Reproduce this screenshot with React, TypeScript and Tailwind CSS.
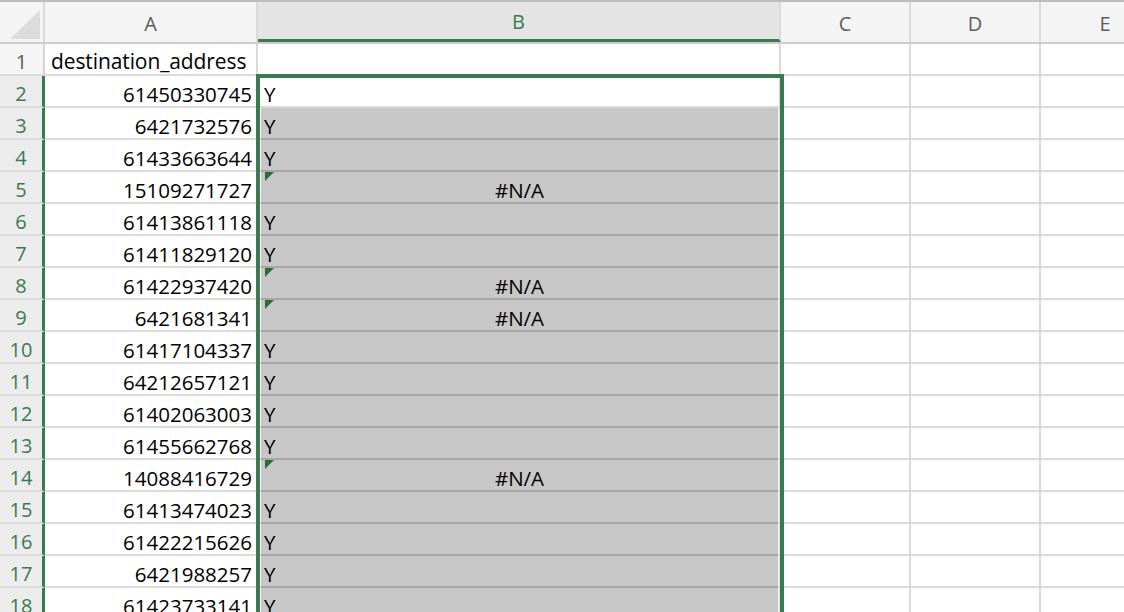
import React from 'react';

const GREEN = '#3b7a4f';

const rows: { n: number; a: string; b: string }[] = [
  { n: 2, a: '61450330745', b: 'Y' },
  { n: 3, a: '6421732576', b: 'Y' },
  { n: 4, a: '61433663644', b: 'Y' },
  { n: 5, a: '15109271727', b: '#N/A' },
  { n: 6, a: '61413861118', b: 'Y' },
  { n: 7, a: '61411829120', b: 'Y' },
  { n: 8, a: '61422937420', b: '#N/A' },
  { n: 9, a: '6421681341', b: '#N/A' },
  { n: 10, a: '61417104337', b: 'Y' },
  { n: 11, a: '64212657121', b: 'Y' },
  { n: 12, a: '61402063003', b: 'Y' },
  { n: 13, a: '61455662768', b: 'Y' },
  { n: 14, a: '14088416729', b: '#N/A' },
  { n: 15, a: '61413474023', b: 'Y' },
  { n: 16, a: '61422215626', b: 'Y' },
  { n: 17, a: '6421988257', b: 'Y' },
  { n: 18, a: '61423733141', b: 'Y' },
];

function ErrorMark() {
  return (
    <svg width="9" height="9" viewBox="0 0 9 9" className="absolute left-[4px] top-0">
      <polygon points="0,0 9,0 0,9" fill="#2f6b3c" />
    </svg>
  );
}

function ColHeader({ label, w, active }: { label: string; w: string; active?: boolean }) {
  return (
    <div
      className={`${w} shrink-0 h-full flex items-center justify-center border-r-2 border-[#dadada] text-[20px] ${
        active ? 'bg-[#e4e4e4] text-[#3b7a4f] border-b-[3px] border-b-[#3b7a4f]' : 'text-[#5c5c5c]'
      }`}
    >
      <span className="pt-[3px]">{label}</span>
    </div>
  );
}

export default function App() {
  return (
    <div
      className="relative w-[1124px] h-[612px] overflow-hidden bg-white text-black"
      style={{ fontFamily: '"Open Sans", Lato, sans-serif' }}
    >
      {/* column headers */}
      <div className="flex h-[44px] bg-[#f4f4f4] border-t-2 border-[#bdbdbd] border-b-2 border-b-[#cdcdcd]">
        <div className="w-[45px] shrink-0 h-full border-r-2 border-[#dadada] relative">
          <svg width="30" height="29" viewBox="0 0 30 29" className="absolute left-[10px] top-[8px]">
            <polygon points="30,0 30,29 0,29" fill="#dcdcdc" />
          </svg>
        </div>
        <ColHeader label="A" w="w-[213px]" />
        <ColHeader label="B" w="w-[523px]" active />
        <ColHeader label="C" w="w-[130px]" />
        <ColHeader label="D" w="w-[130px]" />
        <ColHeader label="E" w="w-[130px]" />
      </div>

      {/* row 1 */}
      <div className="flex h-[32px] border-b-2 border-[#dadada]">
        <div className="w-[45px] shrink-0 bg-[#f5f5f5] border-r-2 border-[#d4d4d4] flex items-center justify-center pt-[6px] text-[20px] text-[#5c5c5c]">
          1
        </div>
        <div className="w-[213px] shrink-0 border-r-2 border-[#dadada] flex items-center pt-[6px] px-[6px] text-[21px] tracking-[-0.1px] overflow-hidden whitespace-nowrap">
          destination_address
        </div>
        <div className="w-[523px] shrink-0 border-r-2 border-[#dadada]" />
        <div className="w-[130px] shrink-0 border-r-2 border-[#dadada]" />
        <div className="w-[130px] shrink-0 border-r-2 border-[#dadada]" />
        <div className="w-[130px] shrink-0" />
      </div>

      {rows.map((r, i) => {
        const active = i === 0;
        return (
          <div key={r.n} className="flex h-[32px]">
            <div
              className="w-[45px] shrink-0 bg-[#ececec] border-r-[3px] border-[#3b7a4f] border-b-2 border-b-[#dadada] flex items-center justify-center pt-[6px] text-[20px]"
              style={{ color: GREEN }}
            >
              {r.n}
            </div>
            <div className="w-[213px] shrink-0 border-r-2 border-b-2 border-[#dadada] flex items-center justify-end pt-[6px] pr-[4px] text-[20.5px]">
              {r.a}
            </div>
            <div className="w-[523px] shrink-0 border-r-2 border-b-2 border-[#dadada] flex">
              <div
                className={`relative flex-1 ml-[3px] mr-[1px] -mb-[2px] flex items-center pt-[6px] text-[20.5px] border-b-2 ${
                  active ? 'bg-white border-[#dadada]' : 'bg-[#c7c7c7] border-[#a6a6a6]'
                } ${r.b === '#N/A' ? 'justify-center' : 'pl-[3px]'}`}
              >
                {r.b === '#N/A' && <ErrorMark />}
                {r.b}
              </div>
            </div>
            <div className="w-[130px] shrink-0 border-r-2 border-b-2 border-[#dadada]" />
            <div className="w-[130px] shrink-0 border-r-2 border-b-2 border-[#dadada]" />
            <div className="w-[130px] shrink-0 border-b-2 border-[#dadada]" />
          </div>
        );
      })}

      {/* selection outline */}
      <div className="absolute left-[256px] top-[74px] w-[528px] h-[600px] border-4 border-[#3b7a4f] pointer-events-none" />
    </div>
  );
}
